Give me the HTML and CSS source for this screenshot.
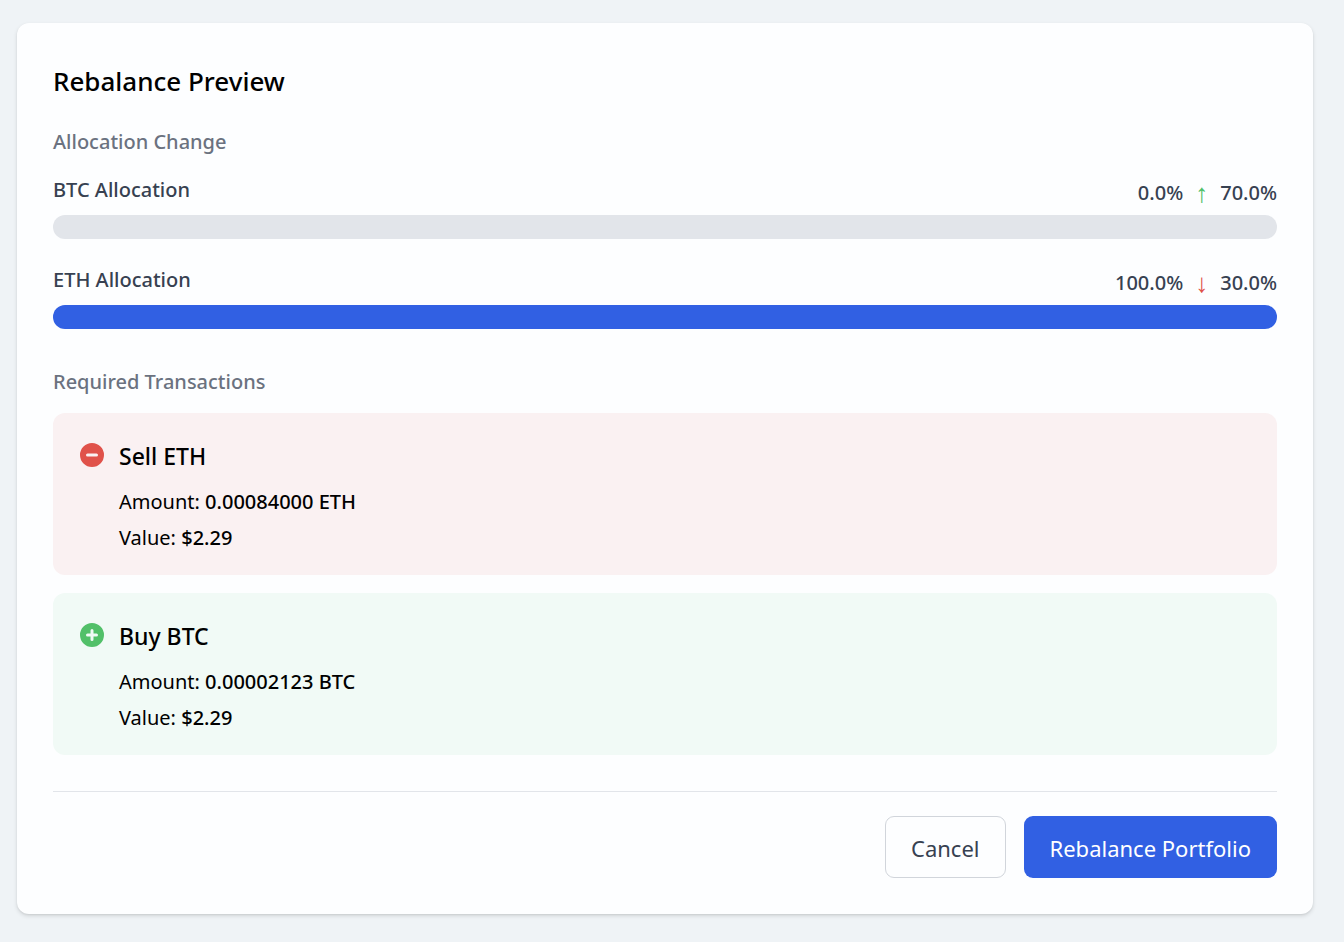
FILE: index.html
```
<!DOCTYPE html>
<html lang="en">
<head>
<meta charset="utf-8">
<meta name="viewport" content="width=device-width, initial-scale=1">
<title>Rebalance Preview</title>
<link rel="stylesheet" href="styles.css">
</head>
<body>
<main class="card">
  <h1 class="title">Rebalance Preview</h1>

  <section class="section">
    <h2 class="subtitle">Allocation Change</h2>
    <div class="allocations">
      <div class="allocation">
        <div class="allocation-head">
          <span class="allocation-name">BTC Allocation</span>
          <span class="allocation-values"><span>0.0%</span><span class="arrow arrow-up">↑</span><span>70.0%</span></span>
        </div>
        <div class="bar"><div class="bar-fill" style="width: 0%"></div></div>
      </div>
      <div class="allocation">
        <div class="allocation-head">
          <span class="allocation-name">ETH Allocation</span>
          <span class="allocation-values"><span>100.0%</span><span class="arrow arrow-down">↓</span><span>30.0%</span></span>
        </div>
        <div class="bar"><div class="bar-fill" style="width: 100%"></div></div>
      </div>
    </div>
  </section>

  <section class="section">
    <h2 class="subtitle">Required Transactions</h2>
    <div class="transactions">
      <article class="transaction sell">
        <div class="transaction-head">
          <svg class="icon" viewBox="0 0 20 20" fill="currentColor" aria-hidden="true"><path fill-rule="evenodd" clip-rule="evenodd" d="M10 18a8 8 0 100-16 8 8 0 000 16zM7 9a1 1 0 000 2h6a1 1 0 100-2H7z"/></svg>
          <h3 class="transaction-title">Sell ETH</h3>
        </div>
        <div class="details">
          <p class="detail">Amount: <strong class="value">0.00084000 ETH</strong></p>
          <p class="detail">Value: <strong class="value">$2.29</strong></p>
        </div>
      </article>
      <article class="transaction buy">
        <div class="transaction-head">
          <svg class="icon" viewBox="0 0 20 20" fill="currentColor" aria-hidden="true"><path fill-rule="evenodd" clip-rule="evenodd" d="M10 18a8 8 0 100-16 8 8 0 000 16zm1-11a1 1 0 10-2 0v2H7a1 1 0 100 2h2v2a1 1 0 102 0v-2h2a1 1 0 100-2h-2V7z"/></svg>
          <h3 class="transaction-title">Buy BTC</h3>
        </div>
        <div class="details">
          <p class="detail">Amount: <strong class="value">0.00002123 BTC</strong></p>
          <p class="detail">Value: <strong class="value">$2.29</strong></p>
        </div>
      </article>
    </div>
  </section>

  <footer class="actions">
    <button class="button button-secondary" type="button">Cancel</button>
    <button class="button button-primary" type="button">Rebalance Portfolio</button>
  </footer>
</main>
</body>
</html>
```
FILE: styles.css
```
* {
  box-sizing: border-box;
}

body {
  margin: 0;
  padding: 23px 31px 28px 17px;
  background: #eff3f6;
  color: #000;
  font-family: "Segoe UI", "Noto Sans", "Open Sans", sans-serif;
  font-size: 20px;
  line-height: 34px;
}

h1, h2, h3, p {
  margin: 0;
}

.card {
  display: flex;
  flex-direction: column;
  gap: 36px;
  padding: 36px;
  background: #fdfeff;
  border-radius: 12px;
  box-shadow: 0 2px 4px rgba(0, 0, 0, 0.12), 0 1px 2px rgba(0, 0, 0, 0.06);
}

.title {
  margin-bottom: -14px;
  font-size: 26px;
  font-weight: 500;
  line-height: 44px;
}

.section {
  display: flex;
  flex-direction: column;
  gap: 14px;
}

.subtitle {
  color: #6b7280;
  font-size: 20px;
  font-weight: 500;
  line-height: 34px;
}

.allocations {
  display: flex;
  flex-direction: column;
  gap: 24px;
}

.allocation {
  display: flex;
  flex-direction: column;
  gap: 2px;
}

.allocation-head {
  display: flex;
  justify-content: space-between;
  color: #374151;
  font-weight: 500;
}

.allocation-values {
  display: flex;
  gap: 12px;
  line-height: 40px;
}

.arrow {
  font-family: "Segoe UI", "Liberation Sans", sans-serif;
  font-size: 26px;
  font-weight: 400;
}

.arrow-up {
  color: #4fc068;
}

.arrow-down {
  color: #e0524a;
}

.bar {
  height: 24px;
  overflow: hidden;
  background: #e2e5ea;
  border-radius: 12px;
}

.bar-fill {
  height: 100%;
  background: #3160e3;
}

.transactions {
  display: flex;
  flex-direction: column;
  gap: 18px;
}

.transaction {
  display: flex;
  flex-direction: column;
  gap: 10px;
  padding: 24px 24px 20px;
  border-radius: 12px;
}

.sell {
  background: #faf1f2;
}

.buy {
  background: #f1faf6;
}

.transaction-head {
  display: flex;
  align-items: flex-start;
  gap: 12px;
}

.icon {
  width: 30px;
  height: 30px;
  margin-top: 3px;
}

.sell .icon {
  color: #e0524a;
}

.buy .icon {
  color: #52c069;
}

.transaction-title {
  font-size: 23px;
  font-weight: 500;
  line-height: 38px;
}

.details {
  display: flex;
  flex-direction: column;
  gap: 2px;
  padding-left: 42px;
}

.value {
  font-weight: 500;
}

.actions {
  display: flex;
  justify-content: flex-end;
  gap: 18px;
  padding-top: 24px;
  border-top: 1px solid #e2e5ea;
}

.button {
  padding: 13px 25px 11px;
  border: 1px solid transparent;
  border-radius: 9px;
  font-family: inherit;
  font-size: 22px;
  line-height: 36px;
}

.button-secondary {
  background: #fdfeff;
  border-color: #d1d5db;
  color: #374151;
}

.button-primary {
  background: #3160e3;
  color: #fff;
}
```
